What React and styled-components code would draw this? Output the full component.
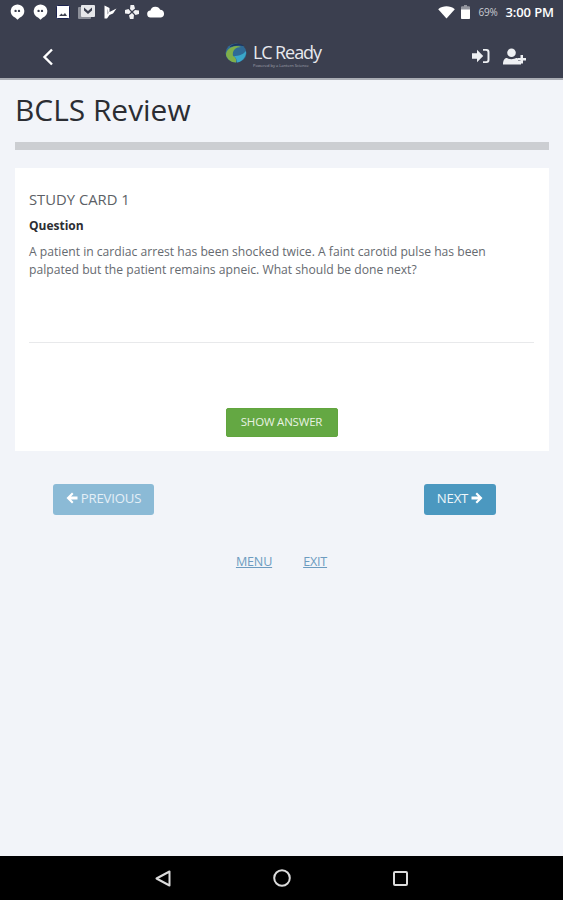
import React from "react";
import styled, { createGlobalStyle } from "styled-components";

const Global = createGlobalStyle`
  html, body { margin: 0; padding: 0; }
  body { background: #f2f4f9; font-family: "Open Sans", "Liberation Sans", sans-serif; }
`;

const Screen = styled.div`
  width: 563px;
  height: 900px;
  display: flex;
  flex-direction: column;
  overflow: hidden;
`;

const Header = styled.header`
  height: 78px;
  flex: none;
  background: #3b3f4f;
  border-bottom: 2px solid #a9acb3;
  display: flex;
  flex-direction: column;
`;

const StatusBar = styled.div`
  height: 24px;
  padding: 0 9px 0 10px;
  display: flex;
  align-items: center;
  justify-content: space-between;
  color: #fff;
`;

const StatusIcons = styled.div`
  display: flex;
  align-items: center;
  gap: 8px;
`;

const Battery = styled.span`
  font-size: 10px;
  color: #c9cbd2;
  margin: 0 2px;
  letter-spacing: -0.2px;
`;

const Clock = styled.span`
  font-size: 13px;
  font-weight: 600;
  letter-spacing: -0.1px;
`;

const StatusRight = styled.div`
  display: flex;
  align-items: center;
  gap: 6px;
`;

const AppBar = styled.div`
  flex: 1;
  display: grid;
  grid-template-columns: 184px auto 1fr;
  align-items: center;
  padding: 8px 37px 0 41px;
`;

const BackSlot = styled.div`
  padding-top: 9px;
`;

const Logo = styled.div`
  display: flex;
  align-items: flex-start;
  gap: 6px;
`;

const LogoText = styled.div`
  display: flex;
  flex-direction: column;
  gap: 1px;
  color: #e8e9ee;
`;

const LogoName = styled.span`
  font-size: 18px;
  letter-spacing: -1.1px;
  line-height: 19px;
`;

const LogoTag = styled.span`
  font-size: 4px;
  line-height: 5px;
  color: #a5a8b3;
  white-space: nowrap;
`;

const BarActions = styled.div`
  display: flex;
  justify-content: flex-end;
  align-items: center;
  gap: 13px;
  padding-top: 2px;
`;

const Main = styled.main`
  flex: 1;
  padding: 0 14px 0 15px;
  display: flex;
  flex-direction: column;
`;

const Title = styled.h1`
  margin: 11px 0 0;
  font-size: 29.9px;
  line-height: 38px;
  font-weight: 400;
  color: #2b2d33;
`;

const Rule = styled.div`
  height: 8px;
  margin-top: 13px;
  background: #ccced2;
`;

const Card = styled.section`
  margin-top: 18px;
  height: 283px;
  background: #fff;
  padding: 22px 15px 14px 14px;
  box-sizing: border-box;
  display: flex;
  flex-direction: column;
`;

const CardLabel = styled.div`
  font-size: 14.8px;
  line-height: 19px;
  color: #5c5f66;
`;

const Question = styled.div`
  margin-top: 9px;
  font-size: 12px;
  line-height: 16px;
  font-weight: 700;
  color: #2c2e33;
`;

const Body = styled.p`
  margin: 9px 0 0;
  max-width: 480px;
  font-size: 12.15px;
  line-height: 18px;
  color: #666a70;
`;

const Divider = styled.hr`
  margin: 63px 0 0;
  border: 0;
  border-top: 1px solid #e8e9eb;
`;

const CardFoot = styled.div`
  margin-top: auto;
  display: flex;
  justify-content: center;
`;

const AnswerButton = styled.button`
  width: 112px;
  height: 29px;
  padding: 0 0 2px;
  border: 1px solid #62a53e;
  border-radius: 2px;
  background: #64a843;
  color: #e8f2e2;
  font: 400 11.5px "Open Sans", sans-serif;
  letter-spacing: -0.2px;
`;

const Pager = styled.nav`
  margin-top: 33px;
  padding: 0 53px 0 38px;
  display: flex;
  justify-content: space-between;
`;

const PageButton = styled.button`
  height: 31px;
  width: ${(p) => p.$width}px;
  padding: 0 0 3px;
  border: 0;
  border-radius: 3px;
  background: ${(p) => (p.$muted ? "#8bbad6" : "#4b98c0")};
  color: ${(p) => (p.$muted ? "#e4eff6" : "#eef6fa")};
  font: 400 13.2px "Open Sans", sans-serif;
  letter-spacing: -0.2px;
  display: flex;
  align-items: center;
  justify-content: center;
  gap: 3px;
`;

const Links = styled.div`
  margin-top: 39px;
  display: flex;
  justify-content: center;
  gap: 31px;
  padding-right: 1px;
`;

const TextLink = styled.a`
  font-size: 12.6px;
  line-height: 16px;
  letter-spacing: -0.2px;
  color: #6d9cc0;
  text-decoration: underline;
`;

const NavBar = styled.footer`
  height: 44px;
  flex: none;
  background: #000;
  display: flex;
  align-items: center;
  justify-content: center;
  gap: 102px;
  padding-right: 1px;
`;

const Bubble = () => (
  <svg width="15" height="16" viewBox="0 0 14 15">
    <path d="M7 .5a6.3 6.3 0 0 1 2 12.3L7 14.7l-2-1.9A6.3 6.3 0 0 1 7 .5z" fill="#fff" />
    <circle cx="5.200" cy="6.500" r="1.100" fill="#3b3f4f" />
    <circle cx="8.400" cy="6.500" r="1.100" fill="#3b3f4f" />
  </svg>
);

const Picture = () => (
  <svg width="14" height="14" viewBox="0 0 14 14">
    <rect x="0.500" y="0.500" width="13" height="13" rx="1" fill="#fff" stroke="#1c2350" />
    <path d="M3 11l2.500-2.500 1.500 1.500 2-2 2 3z" fill="#3b3f4f" />
  </svg>
);

const Photos = () => (
  <svg width="18" height="16" viewBox="0 0 18 16">
    <rect x="0" y="3" width="13" height="12" rx="1" fill="#8c8f99" />
    <rect x="3" y="1" width="14" height="12" rx="1" fill="#e6e7ea" />
    <path d="M6 3.500l4 3.500 4-3.500v3l-4 3.500-4-3.500z" fill="#3b3f4f" />
  </svg>
);

const Flags = () => (
  <svg width="13" height="14" viewBox="0 0 13 14">
    <path d="M.5 .5l5 2.500v4L12.500 3.500 9 8.500l-3.500 1.500-2.500 3.500H.5z" fill="#fff" />
    <path d="M3 3.500v6l2-1.500z" fill="#3b3f4f" opacity=".35" />
  </svg>
);

const Pinwheel = () => (
  <svg width="14" height="14" viewBox="0 0 14 14" fill="#f2f2f4">
    <path d="M5.500 0h3.500l1 3.500-3 2.500-2-2z" />
    <path d="M14 5.500V9l-3.500 1-2.500-3 2-2z" />
    <path d="M8.500 14H5l-1-3.500 3-2.500 2 2z" />
    <path d="M0 8.500V5l3.500-1 2.500 3-2 2z" />
  </svg>
);

const Cloud = () => (
  <svg width="18" height="12" viewBox="0 0 18 12">
    <path d="M4 11.500a3.500 3.500 0 0 1-.6-7A5.200 5.200 0 0 1 13.200 3.800 3.900 3.900 0 0 1 14 11.500z" fill="#fff" />
  </svg>
);

const Wifi = () => (
  <svg width="17" height="13" viewBox="0 0 17 13">
    <path d="M8.500 12.600L.2 3.200C5 -.6 12 -.6 16.800 3.200z" fill="#fff" />
  </svg>
);

const BatteryIcon = () => (
  <svg width="9" height="14" viewBox="0 0 9 14">
    <path d="M3 0h3v1.200h2a1 1 0 0 1 1 1V13a1 1 0 0 1-1 1H1a1 1 0 0 1-1-1V2.200a1 1 0 0 1 1-1h2z" fill="#fff" opacity=".45" />
    <path d="M0 4.600h9V13a1 1 0 0 1-1 1H1a1 1 0 0 1-1-1z" fill="#fff" />
  </svg>
);

const BackChevron = () => (
  <svg width="14" height="18" viewBox="0 0 14 18" fill="none" stroke="#fff" strokeWidth="2.400">
    <path d="M11 1.500L3.500 9l7.500 7.500" />
  </svg>
);

const Globe = () => (
  <svg width="22" height="20" viewBox="0 0 22 20">
    <ellipse cx="11" cy="10" rx="10.500" ry="9.500" fill="#2f6a96" />
    <path d="M1 12c1 4 5 7.500 10 7.500 1-3-1-6-3-6.500-1-6 3-9 8-9-6-3-15 1-15 8z" fill="#7faf4a" />
    <path d="M9 13c4 0 9-1 12-5 .5 5-3 10.500-9 11.500 0-2.500-1-4.500-3-6.500z" fill="#3aa7c9" />
    <path d="M4 4c4-4 11-4.500 15-1-5-1-10-.5-15 1z" fill="#1c3560" />
  </svg>
);

const SignIn = () => (
  <svg width="18" height="16" viewBox="0 0 18 16" fill="#eef0f3">
    <path d="M0 5.200h5V1.800L11.200 8 5 14.200v-3.400H0z" />
    <path d="M11 1h3.500A3 3 0 0 1 17.500 4v8a3 3 0 0 1-3 3H11v-1.800h3a1.500 1.500 0 0 0 1.500-1.500V4.300A1.500 1.500 0 0 0 14 2.800h-3z" />
  </svg>
);

const UserPlus = () => (
  <svg width="23" height="17" viewBox="0 0 23 17" fill="#eef0f3">
    <circle cx="8.500" cy="4.800" r="4.300" />
    <path d="M0 16.500c0-5 2-6.500 4-6.500 2 1.500 7 1.500 9 0 1 0 1.500.3 2 .8V13h3v3.500z" />
    <path d="M17.500 7h2.500v3h3v2.500h-3v3h-2.500v-3h-3V10h3z" />
  </svg>
);

const Arrow = ({ left }) => (
  <svg width="12" height="12" viewBox="0 0 12 12" fill="#fff">
    <path d={left ? "M6 .5L.5 6 6 11.500l1.500-1.500L5 7.400h6.500V4.600H5L7.500 2z" : "M6 .5L11.500 6 6 11.500 4.500 10 7 7.400H.5V4.600H7L4.500 2z"} />
  </svg>
);

const NavBack = () => (
  <svg width="16" height="17" viewBox="0 0 16 17" fill="none" stroke="#dcdcdc" strokeWidth="2" strokeLinejoin="round">
    <path d="M14.500 1.500v14L1.500 8.500z" />
  </svg>
);

const NavHome = () => (
  <svg width="18" height="18" viewBox="0 0 18 18" fill="none" stroke="#dcdcdc" strokeWidth="2">
    <circle cx="9" cy="9" r="7.800" />
  </svg>
);

const NavRecent = () => (
  <svg width="15" height="15" viewBox="0 0 15 15" fill="none" stroke="#dcdcdc" strokeWidth="2">
    <rect x="1" y="1" width="13" height="13" rx="1" />
  </svg>
);

export default function App() {
  return (
    <Screen>
      <Global />
      <Header>
        <StatusBar>
          <StatusIcons>
            <Bubble />
            <Bubble />
            <Picture />
            <Photos />
            <Flags />
            <Pinwheel />
            <Cloud />
          </StatusIcons>
          <StatusRight>
            <Wifi />
            <BatteryIcon />
            <Battery>69%</Battery>
            <Clock>3:00 PM</Clock>
          </StatusRight>
        </StatusBar>
        <AppBar>
          <BackSlot>
            <BackChevron />
          </BackSlot>
          <Logo>
            <Globe />
            <LogoText>
              <LogoName>LC Ready</LogoName>
              <LogoTag>Powered by a Lantern Science</LogoTag>
            </LogoText>
          </Logo>
          <BarActions>
            <SignIn />
            <UserPlus />
          </BarActions>
        </AppBar>
      </Header>
      <Main>
        <Title>BCLS Review</Title>
        <Rule />
        <Card>
          <CardLabel>STUDY CARD 1</CardLabel>
          <Question>Question</Question>
          <Body>
            A patient in cardiac arrest has been shocked twice. A faint carotid pulse has been
            palpated but the patient remains apneic. What should be done next?
          </Body>
          <Divider />
          <CardFoot>
            <AnswerButton>SHOW ANSWER</AnswerButton>
          </CardFoot>
        </Card>
        <Pager>
          <PageButton $muted $width={101}>
            <Arrow left />
            PREVIOUS
          </PageButton>
          <PageButton $width={72}>
            NEXT
            <Arrow />
          </PageButton>
        </Pager>
        <Links>
          <TextLink>MENU</TextLink>
          <TextLink>EXIT</TextLink>
        </Links>
      </Main>
      <NavBar>
        <NavBack />
        <NavHome />
        <NavRecent />
      </NavBar>
    </Screen>
  );
}
